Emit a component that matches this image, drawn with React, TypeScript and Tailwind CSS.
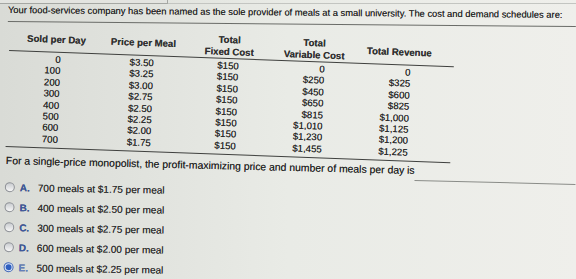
import React from "react";

const font = { fontFamily: '"Liberation Sans", Arial, sans-serif' };

const cols = [
  { head: ["Sold per Day"], pr: "pr-[42px]", vals: ["0", "100", "200", "300", "400", "500", "600", "700"] },
  { head: ["Price per Meal"], pr: "pr-[29px]", vals: ["$3.50", "$3.25", "$3.00", "$2.75", "$2.50", "$2.25", "$2.00", "$1.75"] },
  { head: ["Total", "Fixed Cost"], pr: "pr-[36px]", vals: ["$150", "$150", "$150", "$150", "$150", "$150", "$150", "$150"] },
  { head: ["Total", "Variable Cost"], pr: "pr-[28px]", vals: ["0", "$250", "$450", "$650", "$815", "$1,010", "$1,230", "$1,455"] },
  { head: ["Total Revenue"], pr: "pr-[34px]", vals: ["0", "$325", "$600", "$825", "$1,000", "$1,125", "$1,200", "$1,225"] },
];

const options = [
  { l: "A.", t: "700 meals at $1.75 per meal", sel: false },
  { l: "B.", t: "400 meals at $2.50 per meal", sel: false },
  { l: "C.", t: "300 meals at $2.75 per meal", sel: false },
  { l: "D.", t: "600 meals at $2.00 per meal", sel: false },
  { l: "E.", t: "500 meals at $2.25 per meal", sel: true },
];

function Radio({ sel }: { sel: boolean }) {
  if (sel) {
    return (
      <div className="w-[10px] h-[10px] rounded-full border border-[#3f66b8] bg-[#dfe8f7] flex items-center justify-center">
        <div className="w-[6px] h-[6px] rounded-full bg-[#2f5fc0]" />
      </div>
    );
  }
  return (
    <div className="w-[10px] h-[10px] rounded-full border border-[#8d9096] bg-gradient-to-b from-[#c9ccd0] to-[#f7f7f7]" />
  );
}

export default function App() {
  return (
    <div
      className="w-[576px] h-[279px] overflow-hidden bg-gradient-to-r from-[#d9dbd6] via-[#e9ebe6] to-[#efefeb] text-[#222] [text-shadow:0_0_0.4px_rgba(0,0,0,0.55)]"
      style={font}
    >
      {/* top strip */}
      <div className="flex h-[4px]">
        <div className="w-[168px] border-b border-r border-[#a5a7a3] bg-[#e3e4e0]" />
        <div className="flex-1 border-b border-[#c3c5c1]" />
      </div>

      {/* title */}
      <div className="origin-top-left rotate-[0.5deg]">
        <div className="pl-[8px] h-[12px] leading-[12px] text-[9.35px] whitespace-nowrap">
          Your food-services company has been named as the sole provider of meals at a small university. The cost and demand schedules are:
        </div>
        <div className="ml-[8px] mt-[5px] h-px bg-[#6a6c68]" />
      </div>

      {/* table */}
      <div className="ml-[10px] mt-[4px] w-[445px] origin-top-left rotate-[2.1deg] text-[9.6px]">
        <div className="grid grid-cols-[94px_80px_92px_78px_92px]">
          {cols.map((c, i) => (
            <div key={i} className="h-[24px] flex flex-col items-center justify-center font-bold leading-[12px] text-[#2f2f2f] text-center">
              {c.head.map((h, j) => (
                <div key={j}>{h}</div>
              ))}
            </div>
          ))}
        </div>
        <div className="h-px bg-[#3f403e]" />
        <div className="pt-[1px] pb-[3px] grid grid-cols-[94px_80px_92px_78px_92px]">
          {cols.map((c, i) => (
            <div key={i} className={`flex flex-col items-end ${c.pr}`}>
              {c.vals.map((v, j) => (
                <div key={j} className="h-[11.4px] leading-[11.4px]">
                  {v}
                </div>
              ))}
            </div>
          ))}
        </div>
        <div className="h-px bg-[#3f403e]" />
      </div>

      {/* question */}
      <div className="mt-[8px] ml-[6px] flex items-start origin-top-left rotate-[1.4deg]">
        <div className="h-[12px] leading-[12px] text-[10.4px] whitespace-nowrap">
          For a single-price monopolist, the profit-maximizing price and number of meals per day is
        </div>
        <div className="flex-1 h-px mt-[15px] bg-[#8a8c88]" />
      </div>

      {/* options */}
      <div className="mt-[6px] origin-top-left rotate-[0.9deg]">
        {options.map((o) => (
          <div key={o.l} className="h-[20px] flex items-center pl-[5px]">
            <Radio sel={o.sel} />
            <span
              className={`ml-[5px] w-[18px] text-[10px] font-bold ${o.sel ? "text-[#5f80c8]" : "text-[#3b57a0]"}`}
            >
              {o.l}
            </span>
            <span className="text-[10px] text-[#2a2a2a]">{o.t}</span>
          </div>
        ))}
      </div>
    </div>
  );
}
